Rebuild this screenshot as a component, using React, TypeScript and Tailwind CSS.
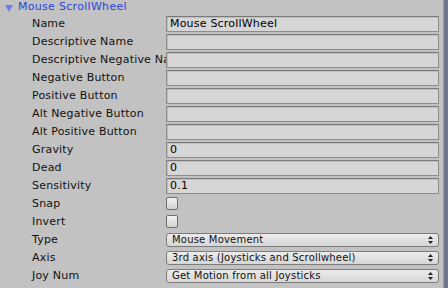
import React from 'react';

type Row =
    | { label: string; kind: 'text'; value: string }
    | { label: string; kind: 'check' }
    | { label: string; kind: 'popup'; value: string };

const ROWS: Row[] = [
    { label: 'Name', kind: 'text', value: 'Mouse ScrollWheel' },
    { label: 'Descriptive Name', kind: 'text', value: '' },
    { label: 'Descriptive Negative Name', kind: 'text', value: '' },
    { label: 'Negative Button', kind: 'text', value: '' },
    { label: 'Positive Button', kind: 'text', value: '' },
    { label: 'Alt Negative Button', kind: 'text', value: '' },
    { label: 'Alt Positive Button', kind: 'text', value: '' },
    { label: 'Gravity', kind: 'text', value: '0' },
    { label: 'Dead', kind: 'text', value: '0' },
    { label: 'Sensitivity', kind: 'text', value: '0.1' },
    { label: 'Snap', kind: 'check' },
    { label: 'Invert', kind: 'check' },
    { label: 'Type', kind: 'popup', value: 'Mouse Movement' },
    { label: 'Axis', kind: 'popup', value: '3rd axis (Joysticks and Scrollwheel)' },
    { label: 'Joy Num', kind: 'popup', value: 'Get Motion from all Joysticks' },
];

const Arrows = () => (
    <svg width="5" height="8" viewBox="0 0 5 8" className="shrink-0">
        <path d="M2.5 0 L5 3 L0 3 Z" fill="#222" />
        <path d="M2.5 8 L5 5 L0 5 Z" fill="#222" />
    </svg>
);

const Control = ({ row }: { row: Row }) => {
    if (row.kind === 'text') {
        return (
            <div className="h-4 flex-1 border border-[#8c8c8c] border-t-[#7a7a7a] bg-[#d6d6d6] shadow-[inset_1px_1px_0_#bdbdbd] px-[3px] text-[11px] leading-[14px] tracking-[0.2px] text-black">
                {row.value}
            </div>
        );
    }
    if (row.kind === 'check') {
        return (
            <div className="h-[13px] w-[12px] mt-[1px] rounded-[2px] border border-[#6e6e6e] bg-gradient-to-b from-[#f2f2f2] to-[#d2d2d2]" />
        );
    }
    return (
        <div className="h-[14px] mt-[1px] flex-1 flex items-center justify-between rounded-[3px] border border-[#7c7c7c] bg-gradient-to-b from-[#ececec] to-[#d6d6d6] pl-[5px] pr-[5px] text-[10px] leading-[12px] text-[#111] tracking-[0.2px]">
            <span>{row.value}</span>
            <Arrows />
        </div>
    );
};

export default function App() {
    return (
        <div
            className="w-[448px] h-[288px] overflow-hidden bg-[#c2c2c2] flex"
            style={{ fontFamily: '"DejaVu Sans", Verdana, sans-serif' }}
        >
            <div className="flex-1 flex flex-col">
                {/* Header */}
                <div className="h-4 flex items-center pl-[5px] gap-[5px] text-[11px] leading-[14px] tracking-[0.3px] text-[#2a44e0]">
                    <svg width="8" height="7" viewBox="0 0 8 7">
                        <path d="M0 0 L8 0 L4 7 Z" fill="#6d7ee8" />
                    </svg>
                    <span className="-mt-[3px]">Mouse ScrollWheel</span>
                </div>

                {/* Rows */}
                <div className="flex flex-col gap-[2px] pr-[4px]">
                    {ROWS.map((row) => (
                        <div key={row.label} className="h-4 flex">
                            <div className="w-[166px] shrink-0 overflow-hidden whitespace-nowrap pl-[32px] text-[11px] leading-[16px] tracking-[0.2px] text-[#111]">
                                {row.label}
                            </div>
                            <Control row={row} />
                        </div>
                    ))}
                </div>
            </div>

            {/* Scrollbar edge */}
            <div className="w-[5px] h-full bg-[#6f7686] border-l border-[#9aa0ab]" />
        </div>
    );
}
